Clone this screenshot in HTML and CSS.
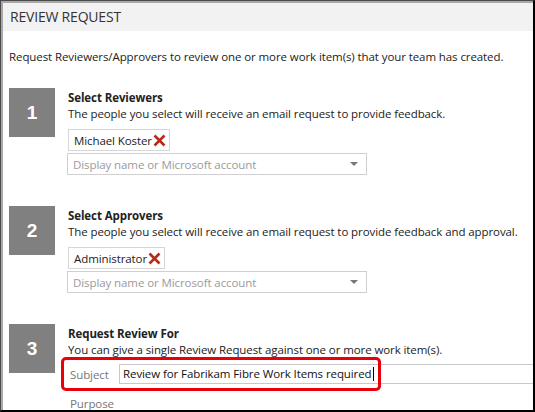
FILE: index.html
```html
<!DOCTYPE html>
<html>
<head>
<meta charset="utf-8">
<link rel="stylesheet" href="styles.css">
</head>
<body>
<div class="frame">
  <div class="inner">
    <div class="header">REVIEW REQUEST</div>
    <div class="content">
      <p class="intro">Request Reviewers/Approvers to review one or more work item(s) that your team has created.</p>

      <div class="step step1">
        <div class="num">1</div>
        <div class="body">
          <div class="title">Select Reviewers</div>
          <div class="desc">The people you select will receive an email request to provide feedback.</div>
          <div class="token">Michael Koster<svg class="x" width="13" height="13" viewBox="0 0 13 13"><path d="M1.5 1.5 L11.5 11.5 M11.5 1.5 L1.5 11.5" stroke="#b8291c" stroke-width="2.6" stroke-linecap="butt"/></svg></div>
          <div class="picker"><span class="ph">Display name or Microsoft account</span><span class="caret"></span></div>
        </div>
      </div>

      <div class="step step2">
        <div class="num">2</div>
        <div class="body">
          <div class="title">Select Approvers</div>
          <div class="desc">The people you select will receive an email request to provide feedback and approval.</div>
          <div class="token">Administrator<svg class="x" width="13" height="13" viewBox="0 0 13 13"><path d="M1.5 1.5 L11.5 11.5 M11.5 1.5 L1.5 11.5" stroke="#b8291c" stroke-width="2.6" stroke-linecap="butt"/></svg></div>
          <div class="picker"><span class="ph">Display name or Microsoft account</span><span class="caret"></span></div>
        </div>
      </div>

      <div class="step step3">
        <div class="num">3</div>
        <div class="body">
          <div class="title">Request Review For</div>
          <div class="desc">You can give a single Review Request against one or more work item(s).</div>
        </div>
      </div>

      <div class="fields">
        <div class="field">
          <span class="label">Subject</span>
          <div class="textbox">Review for Fabrikam Fibre Work Items required<span class="cursor"></span></div>
        </div>
        <div class="field purpose">
          <span class="label">Purpose</span>
        </div>
        <div class="highlight"></div>
      </div>
    </div>
  </div>
</div>
</body>
</html>
```

FILE: styles.css
```css
* { box-sizing: border-box; }
html, body { margin: 0; padding: 0; }
body {
  width: 535px;
  height: 412px;
  overflow: hidden;
  font-family: "Open Sans", "Noto Sans", sans-serif;
  color: #222;
  background: #fff;
  letter-spacing: -0.09px;
}
.frame {
  width: 535px;
  height: 412px;
  border-top: 1px solid #4a4a4a;
  border-left: 1px solid #4a4a4a;
  border-right: 2px solid #000;
  border-bottom: 2px solid #000;
  overflow: hidden;
}
.inner {
  height: 100%;
  border-top: 2px solid #a8a8a8;
  border-left: 2px solid #a8a8a8;
  overflow: hidden;
}
.header {
  height: 28px;
  background: #f2f2f2;
  padding-left: 7px;
  font-size: 14px;
  line-height: 28px;
  color: #333;
  letter-spacing: -0.2px;
}
.content {
  padding-left: 6px;
}
.intro {
  margin: 0;
  padding-top: 17px;
  font-size: 11.5px;
  line-height: 17px;
  height: 57px;
}
.step {
  display: flex;
  gap: 13px;
}
.num {
  width: 46px;
  height: 49px;
  flex: none;
  background: #808080;
  color: #fff;
  font-weight: bold;
  font-size: 19px;
  display: flex;
  align-items: center;
  justify-content: center;
  font-family: "Liberation Sans", Arial, sans-serif;
}
.body {
  padding-top: 2px;
  font-size: 11.5px;
}
.title {
  font-weight: bold;
  line-height: 15px;
}
.desc {
  line-height: 17px;
}
.token {
  display: inline-flex;
  align-items: center;
  margin-top: 7px;
  height: 22px;
  border: 1px solid #d6d6d6;
  padding: 0 3px 0 5px;
  font-size: 11.5px;
}
.token .x { margin-left: 1px; }
.picker {
  margin-top: 2px;
  margin-left: -1px;
  width: 300px;
  height: 22px;
  border: 1px solid #d0d0d0;
  display: flex;
  align-items: center;
  justify-content: space-between;
  padding: 0 8px 0 5px;
}
.ph { color: #9a9a9a; font-size: 11.5px; }
.caret {
  width: 0; height: 0;
  border-left: 4px solid transparent;
  border-right: 4px solid transparent;
  border-top: 4px solid #777;
}
.step1 { margin-bottom: 31px; }
.step2 { margin-bottom: 31px; }
.step3 { height: 40px; overflow: visible; }
.step3 .num { align-self: flex-start; }
.fields {
  position: relative;
  margin-left: 59px;
}
.field {
  display: flex;
  align-items: center;
  height: 20px;
}
.purpose {
  margin-top: 10px;
  height: 18px;
}
.label {
  width: 51px;
  flex: none;
  padding-left: 2px;
  color: #777;
  font-size: 11.5px;
}
.textbox {
  flex: 1;
  height: 20px;
  border: 1px solid #c8c8c8;
  border-right: none;
  margin-right: -20px;
  padding-left: 3px;
  font-size: 11.5px;
  line-height: 18px;
  color: #111;
}
.cursor {
  display: inline-block;
  width: 1px;
  height: 14px;
  background: #000;
  vertical-align: -3px;
  margin-left: 1px;
}
.highlight {
  position: absolute;
  left: -7px;
  top: -7px;
  width: 320px;
  height: 34px;
  border: 3px solid #e8000b;
  border-radius: 5px;
}
```
